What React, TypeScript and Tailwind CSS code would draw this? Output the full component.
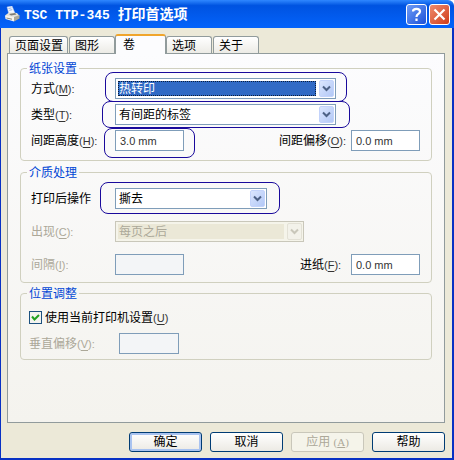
import type { ReactNode } from "react";

const UI_FONT = "font-['Liberation_Sans','Noto_Sans_CJK_SC',sans-serif]";

function PrinterIcon() {
  return (
    <svg width="16" height="16" viewBox="0 0 16 16" aria-hidden="true">
      <path d="M3 1l5-1 3 7-6 1.500z" fill="#f4f8ff" stroke="#a9c2ee" strokeWidth=".5" />
      <path d="M4.500 2.500l3-.6M5.300 4.300l3-.6" stroke="#7f9fd8" strokeWidth=".8" />
      <path d="M1 9.500L5 6.500l8 .5 2.500 3-5.500 3.500z" fill="#e4e2da" />
      <path d="M1 9.500l9 1.500v4.500L1.500 13z" fill="#f6f4ee" />
      <path d="M10 11l5.500-2v3.500L10 15.500z" fill="#a9a79a" />
      <path d="M5 8l6-1 1.500 1.500L7 9.500z" fill="#7c7b76" />
      <path d="M2.500 12l5.500 1.200" stroke="#8a887d" />
    </svg>
  );
}

interface TabProps {
  label: string;
  width: string;
  active?: boolean;
}

const tabs: TabProps[] = [
  { label: "页面设置", width: "w-[59px] mr-px" },
  { label: "图形", width: "w-[46px]" },
  { label: "卷", width: "w-[51px]", active: true },
  { label: "选项", width: "w-[46px] mr-px" },
  { label: "关于", width: "w-[46px]" },
];

function Tab({ label, width, active }: TabProps) {
  const look = active
    ? "h-5 -mb-px border-x border-t-2 border-[#919b9c] border-t-[#f0a52c] bg-[#fcfcfe] pl-[7px] pb-px"
    : "h-[17px] border border-b-0 border-[#919b9c] bg-linear-to-b from-white to-[#ecebe6] pt-px pl-[5px]";
  return (
    <button role="tab" aria-selected={!!active} className={`${width} ${look} rounded-t-[3px] text-left leading-4`}>
      {label}
    </button>
  );
}

function Group({ title, className, children }: { title: string; className: string; children: ReactNode }) {
  return (
    <fieldset className={`min-w-0 rounded border border-[#d0d0bf] ${className}`}>
      <legend className="ml-[6px] h-[14px] px-[2px] leading-4 text-[#0046d5]">{title}</legend>
      {children}
    </fieldset>
  );
}

interface FieldProps {
  id: string;
  text: string;
  hotkey?: string;
  disabled?: boolean;
  className?: string;
}

function FieldLabel({ id, text, hotkey, disabled, className = "" }: FieldProps) {
  return (
    <label htmlFor={id} className={`whitespace-nowrap ${disabled ? "text-[#aca899]" : "text-black"} ${className}`}>
      {text}
      {hotkey && (
        <span className={`text-[11px] ${disabled ? "" : "text-[#333]"}`}>
          (<u className="underline-offset-2">{hotkey}</u>):
        </span>
      )}
    </label>
  );
}

function TextField({ id, value, disabled, width = "w-[69px]" }: { id: string; value?: string; disabled?: boolean; width?: string }) {
  return (
    <input
      id={id}
      type="text"
      defaultValue={value}
      disabled={disabled}
      className={`${width} h-[21px] border border-[#7f9db9] px-1 text-[11px] text-[#333] ${disabled ? "bg-[#f3f5f7]" : "bg-white"}`}
    />
  );
}

interface ComboProps {
  id: string;
  value: string;
  width: string;
  focused?: boolean;
  disabled?: boolean;
}

function Combo({ id, value, width, focused, disabled }: ComboProps) {
  const frame = disabled ? "border-[#c9c7ba] bg-[#f5f4ea]" : "border-[#7f9db9] bg-white";
  let field = "text-black";
  if (focused) field = "bg-[#316ac5] text-white outline-1 -outline-offset-1 outline-dotted outline-[#0b1d3a]";
  if (disabled) field = "bg-[#ebe8d7] text-[#aca899] opacity-100";
  return (
    <div className={`${width} ${frame} flex h-[21px] gap-[3px] border p-[2px] pr-px`}>
      <select id={id} disabled={disabled} className={`${field} h-[15px] min-w-0 flex-1 appearance-none pt-px pl-px leading-[15px]`}>
        <option>{value}</option>
      </select>
      <span
        className={`pointer-events-none -mt-px flex h-[17px] w-[15px] items-center justify-center rounded-[2px] border ${
          disabled ? "border-[#e3e1d6] bg-[#f3f2ea]" : "border-[#c3d3fb] bg-linear-to-br from-[#dbe6fe] to-[#b3c8f6]"
        }`}
      >
        <svg width="9" height="7" viewBox="0 0 9 7" aria-hidden="true">
          <path d="M1 1.500l3.500 3.500L8 1.500" fill="none" stroke={disabled ? "#c9c7ba" : "#4d6185"} strokeWidth="2" />
        </svg>
      </span>
    </div>
  );
}

// rounded blue marker around a control
function Marked({ inset, children }: { inset: string; children: ReactNode }) {
  return (
    <div className="relative">
      {children}
      <div className={`pointer-events-none absolute rounded-[8px] border border-[#1a0a9c] ${inset}`} />
    </div>
  );
}

function DialogButton({ children, primary, disabled }: { children: ReactNode; primary?: boolean; disabled?: boolean }) {
  let look = "border-[#003c74] bg-linear-to-b from-white to-[#eceae4] text-black";
  if (primary) look += " shadow-[inset_0_0_0_2px_#a9c3f0]";
  if (disabled) look = "border-[#c9c7ba] bg-[#f5f4ea] text-[#aca899]";
  return (
    <button disabled={disabled} className={`h-5 w-[73px] rounded-[3px] border leading-[18px] ${look}`}>
      {children}
    </button>
  );
}

export default function App() {
  return (
    <div className={`${UI_FONT} w-full overflow-hidden rounded-tr-[6px] border-b-2 border-[#0831c4] bg-[#ece9d8] text-[12px] leading-4 text-black`}>
      <header className="flex h-7 items-center bg-linear-to-b from-[#2f87ff] from-0% via-[#0053e1] via-20% to-[#0463fb] pr-1 pl-1">
        <PrinterIcon />
        <h1 className="ml-1 flex-1 pt-[2px] text-[14px] font-bold text-white">
          <span className="font-['Liberation_Mono',monospace] text-[13px] whitespace-pre">TSC TTP-345 </span>
          打印首选项
        </h1>
        <div className="flex gap-[2px]">
          <button aria-label="帮助" className="flex size-[21px] items-center justify-center rounded-[3px] border border-white bg-linear-to-br from-[#6f9bf5] to-[#1c4fd8]">
            <svg width="13" height="15" viewBox="0 0 13 15" aria-hidden="true">
              <path d="M3 4.500C3 1 10 1 10 4.500 10 7 6.500 7 6.500 10M6.500 11.500v2.500" fill="none" stroke="#fff" strokeWidth="2.200" />
            </svg>
          </button>
          <button aria-label="关闭" className="flex size-[21px] items-center justify-center rounded-[3px] border border-white bg-linear-to-br from-[#ee8a6c] to-[#cf3a14]">
            <svg width="13" height="13" viewBox="0 0 13 13" aria-hidden="true">
              <path d="M1.500 1.500l10 10M11.500 1.500l-10 10" stroke="#fff" strokeWidth="2.200" />
            </svg>
          </button>
        </div>
      </header>

      <div className="border-r-2 border-l border-[#0831c4] pt-[6px] pr-[7px] pb-[6px] pl-[6px]">
        <div role="tablist" className="relative flex items-end pl-[2px]">
          {tabs.map((tab) => (
            <Tab key={tab.label} {...tab} />
          ))}
        </div>

        <main className="border border-[#919b9c] bg-linear-to-b from-[#fcfcfe] to-[#f4f3ee] px-3 pt-[7px] pb-[62px]">
          <Group title="纸张设置" className="pt-[3px] pb-[9px]">
            <div className="flex flex-col gap-[5px] pr-[11px] pl-[10px]">
              <div className="flex items-center">
                <FieldLabel id="method" text="方式" hotkey="M" className="w-[84px]" />
                <Marked inset="-top-[6px] -bottom-[3px] -left-[10px] -right-[11px]">
                  <Combo id="method" value="热转印" width="w-[221px]" focused />
                </Marked>
              </div>
              <div className="flex items-center">
                <FieldLabel id="kind" text="类型" hotkey="T" className="w-[84px]" />
                <Marked inset="-top-[3px] -bottom-[3px] -left-[13px] -right-[14px]">
                  <Combo id="kind" value="有间距的标签" width="w-[221px]" />
                </Marked>
              </div>
              <div className="flex items-center">
                <FieldLabel id="gap" text="间距高度" hotkey="H" className="w-[84px]" />
                <Marked inset="-top-[2px] -bottom-[7px] -left-[11px] -right-[11px]">
                  <TextField id="gap" value="3.0 mm" />
                </Marked>
                <FieldLabel id="offset" text="间距偏移" hotkey="O" className="ml-auto w-[72px]" />
                <TextField id="offset" value="0.0 mm" />
              </div>
            </div>
          </Group>

          <Group title="介质处理" className="mt-1 pt-[9px] pb-[7px]">
            <div className="flex flex-col gap-3 pr-[11px] pl-[10px]">
              <div className="flex items-center">
                <FieldLabel id="after" text="打印后操作" className="w-[84px]" />
                <Marked inset="-top-[6px] -bottom-[5px] -left-[15px] -right-[13px]">
                  <Combo id="after" value="撕去" width="w-[152px]" />
                </Marked>
              </div>
              <div className="flex items-center">
                <FieldLabel id="occurs" text="出现" hotkey="C" className="w-[84px]" disabled />
                <Combo id="occurs" value="每页之后" width="w-[189px]" disabled />
              </div>
              <div className="flex items-center">
                <FieldLabel id="interval" text="间隔" hotkey="I" className="w-[84px]" disabled />
                <TextField id="interval" disabled />
                <FieldLabel id="feed" text="进纸" hotkey="F" className="ml-auto w-[51px]" />
                <TextField id="feed" value="0.0 mm" />
              </div>
            </div>
          </Group>

          <Group title="位置调整" className="mt-[3px] pt-[11px] pb-[5px]">
            <div className="flex flex-col gap-[9px] pl-2">
              <label className="flex h-[13px] items-center gap-[3px]">
                <span className="relative flex size-[13px]">
                  <input type="checkbox" defaultChecked className="size-[13px] appearance-none border border-[#1c5180] bg-[#f3f3ef]" />
                  <svg width="13" height="13" viewBox="0 0 13 13" className="pointer-events-none absolute inset-0" aria-hidden="true">
                    <path d="M3 5.500l2.500 3L10 4" fill="none" stroke="#21a121" strokeWidth="2" />
                  </svg>
                </span>
                <span>
                  使用当前打印机设置
                  <span className="text-[11px] text-[#333]">
                    (<u className="underline-offset-2">U</u>)
                  </span>
                </span>
              </label>
              <div className="flex items-center">
                <FieldLabel id="vertical" text="垂直偏移" hotkey="V" className="w-[90px]" disabled />
                <TextField id="vertical" width="w-[60px]" disabled />
              </div>
            </div>
          </Group>
        </main>

        <footer className="flex justify-end gap-2 pt-[9px]">
          <DialogButton primary>确定</DialogButton>
          <DialogButton>取消</DialogButton>
          <DialogButton disabled>
            应用{" "}
            <span className="font-['Liberation_Serif',serif] text-[11px]">
              (<u>A</u>)
            </span>
          </DialogButton>
          <DialogButton>帮助</DialogButton>
        </footer>
      </div>
    </div>
  );
}
